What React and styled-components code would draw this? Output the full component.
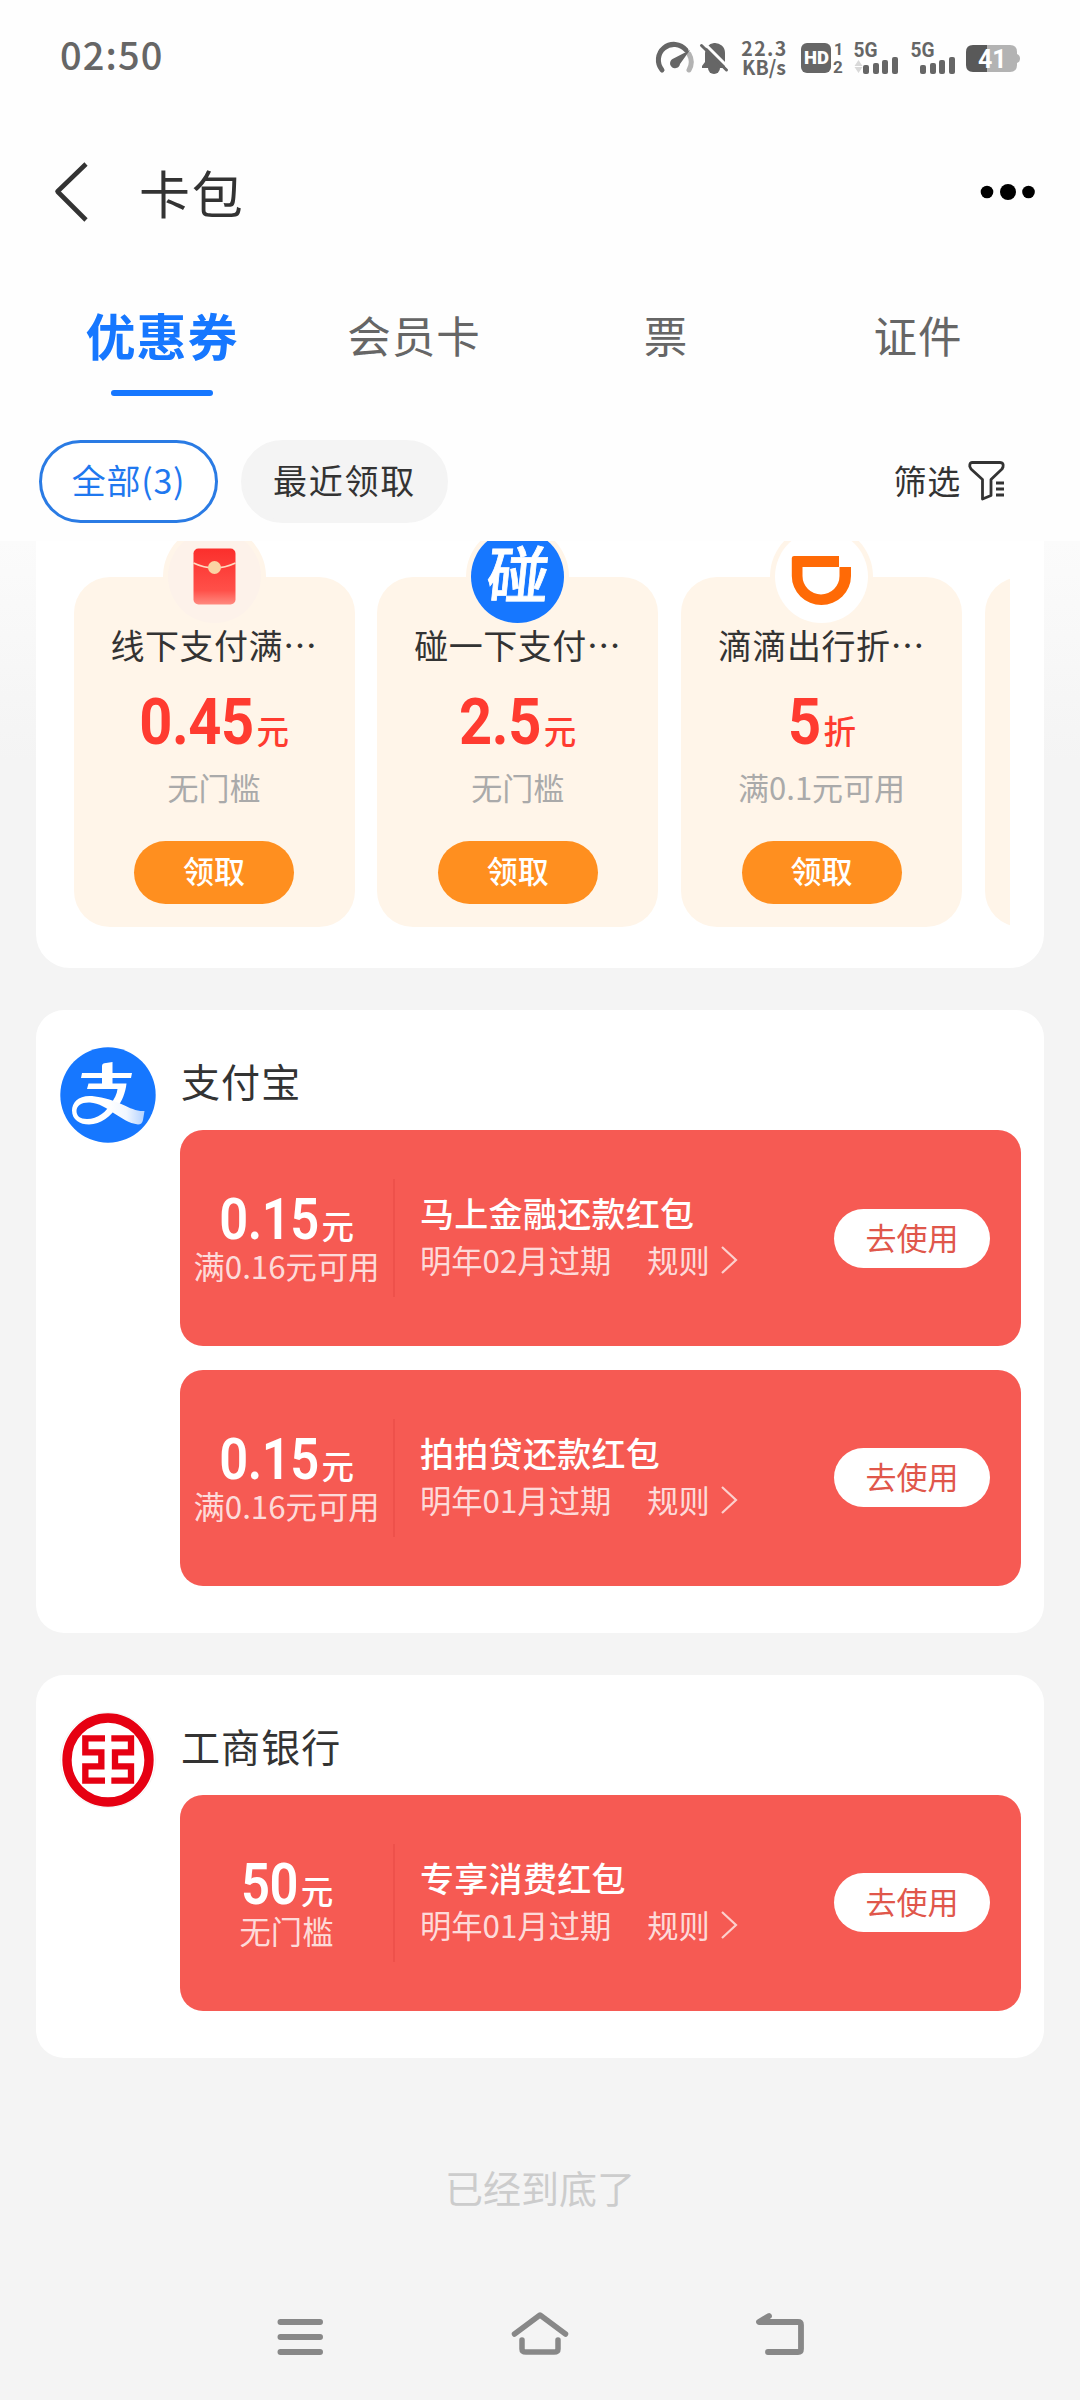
import React from "react";
import styled, { createGlobalStyle } from "styled-components";

const GlobalStyle = createGlobalStyle`
    * {
        box-sizing: border-box;
    }

    body {
        margin: 0;
        background-color: #f4f4f4;
        font-family: "Noto Sans CJK SC", "Noto Sans", sans-serif;
        color: #333333;
    }

    svg {
        display: block;
        flex-shrink: 0;
        overflow: visible;
    }
`;

const Page = styled.div`
    width: 1080px;
    height: 2400px;
    overflow: hidden;
    display: flex;
    flex-direction: column;
`;

const Top = styled.div`
    height: 541px;
    flex-shrink: 0;
    background-color: #fefefe;
`;

const StatusBar = styled.div`
    height: 115px;
    padding: 0 60px 0 60px;
    display: flex;
    align-items: center;
    justify-content: space-between;
    color: #666666;
`;

const Time = styled.div`
    font-size: 38px;
    font-weight: 500;
    line-height: 40px;
    letter-spacing: 1.1px;
    padding-bottom: 7px;
`;

const StatusIcons = styled.div`
    display: flex;
    align-items: center;
`;

const Speed = styled.div`
    width: 48px;
    margin: 0 12px 0 12px;
    padding-bottom: 2px;
    display: flex;
    flex-direction: column;
    align-items: center;
    font-size: 19.5px;
    font-weight: 700;
    line-height: 19px;
    white-space: nowrap;
`;

const SpeedValue = styled.div`
    letter-spacing: 1.4px;
    margin-right: -1px;
`;

const NavBar = styled.div`
    height: 155px;
    padding: 0 45px 2px 54px;
    display: flex;
    align-items: center;
`;

const Title = styled.div`
    flex: 1;
    margin-left: 50px;
    font-size: 51px;
    line-height: 60px;
    letter-spacing: 1.8px;
`;

const Tabs = styled.div`
    display: flex;
    padding: 8px 36px 0;
`;

const Tab = styled.div`
    width: 252px;
    display: flex;
    flex-direction: column;
    align-items: center;
    line-height: ${(props) => (props.$active ? "112px" : "114px")};
    font-size: ${(props) => (props.$active ? "50px" : "43.5px")};
    font-weight: ${(props) => (props.$active ? 700 : 400)};
    letter-spacing: 1px;
    color: ${(props) => (props.$active ? "#1677ff" : "#666666")};
`;

const Underline = styled.div`
    width: 102px;
    height: 6px;
    border-radius: 3px;
    background-color: #1677ff;
`;

const Filters = styled.div`
    display: flex;
    align-items: center;
    padding: 44px 75px 0 39px;
`;

const Chip = styled.div`
    width: ${(props) => props.$width}px;
    height: 83px;
    margin-right: 23px;
    border-radius: 42px;
    border: 3px solid ${(props) => (props.$active ? "#2a7be4" : "#f4f4f4")};
    background-color: ${(props) => (props.$active ? "#ffffff" : "#f4f4f4")};
    color: ${(props) => (props.$active ? "#1f78ef" : "#333333")};
    font-size: 34px;
    line-height: 74px;
    letter-spacing: ${(props) => (props.$active ? "0.7px" : "1.7px")};
    text-align: center;
`;

const FilterButton = styled.div`
    margin-left: auto;
    display: flex;
    align-items: center;
    gap: 7px;
    font-size: 33px;
    line-height: 40px;
    letter-spacing: 0.8px;
    padding-bottom: 3px;
`;

const Content = styled.div`
    flex: 1;
    display: flex;
    flex-direction: column;
    gap: 42px;
    padding: 0 36px;
    background: linear-gradient(#fbfbfb, #f4f4f4 220px);
`;

const Panel = styled.div`
    background-color: #ffffff;
    border-radius: 28px;
`;

const PromoPanel = styled(Panel)`
    height: 427px;
    padding: 0 34.5px 41px 37.5px;
    border-radius: 0 0 34px 34px;
`;

const PromoList = styled.div`
    height: 386px;
    padding-top: 36px;
    display: flex;
    gap: 22.8px;
    overflow: hidden;
`;

const PromoCard = styled.div`
    width: 281px;
    height: 350px;
    flex-shrink: 0;
    border-radius: 36px;
    background-color: #fff5e9;
    display: flex;
    flex-direction: column;
    align-items: center;
`;

const PromoIcon = styled.div`
    width: 103px;
    height: 103px;
    margin-top: -52px;
    border-radius: 50%;
    background-color: #fff5e9;
    display: flex;
    align-items: center;
    justify-content: center;
`;

const PromoTitle = styled.div`
    margin-top: -5px;
    font-size: 34px;
    line-height: 44px;
    letter-spacing: 0.5px;
`;

/* Roboto digits squeezed towards the unit that follows them */
const Digits = styled.b`
    display: inline-block;
    font-family: Roboto, sans-serif;
    font-size: ${(props) => props.$size}px;
    font-weight: ${(props) => props.$weight};
    letter-spacing: -0.5px;
    transform: scaleX(0.89);
    transform-origin: right;
    margin-left: calc(${(props) => props.$length} * -0.055em);
    margin-right: 3px;
`;

const PromoAmount = styled.div`
    height: 64px;
    margin-top: 23px;
    display: flex;
    align-items: baseline;
    color: #ff3b30;
    font-size: 32.5px;
    font-weight: 500;
    line-height: 64px;
`;

const PromoLimit = styled.div`
    margin-top: 13px;
    font-size: 31px;
    line-height: 40px;
    color: #aaaaaa;
`;

const PromoButton = styled.div`
    width: 160px;
    height: 63px;
    margin-top: auto;
    margin-bottom: 23px;
    border-radius: 32px;
    background-color: #ff8f1f;
    color: #ffffff;
    font-size: 31px;
    font-weight: 500;
    line-height: 58px;
    text-align: center;
`;

const Group = styled(Panel)`
    display: flex;
    align-items: flex-start;
    padding: 37px 23px 47px 24px;
`;

const GroupBody = styled.div`
    flex: 1;
    margin-left: 24px;
`;

const GroupName = styled.div`
    height: 83px;
    padding-left: 1px;
    font-size: 39px;
    line-height: 66px;
    letter-spacing: 1.1px;
`;

const CouponList = styled.div`
    display: flex;
    flex-direction: column;
    gap: 23.5px;
`;

const Coupon = styled.div`
    height: 216px;
    padding-right: 31px;
    border-radius: 23px;
    background-color: #f65a53;
    color: #ffffff;
    display: flex;
    align-items: center;
`;

const CouponValue = styled.div`
    width: 215px;
    height: 118px;
    border-right: 2px solid #ee514b;
    display: flex;
    flex-direction: column;
    align-items: center;
`;

const CouponAmount = styled.div`
    height: 52px;
    display: flex;
    align-items: baseline;
    font-size: 32.5px;
    font-weight: 500;
    line-height: 52px;
    margin-top: 15px;
`;

const CouponText = styled.div`
    font-size: 31.3px;
    line-height: 40px;
    color: rgba(255, 255, 255, 0.8);
    white-space: nowrap;
`;

const CouponInfo = styled.div`
    flex: 1;
    padding: 0 0 6px 25px;
`;

const CouponName = styled.div`
    font-size: 34px;
    font-weight: 500;
    line-height: 48px;
    letter-spacing: 0.3px;
    white-space: nowrap;
`;

const CouponMeta = styled.div`
    display: flex;
    align-items: center;
    margin-top: 3px;
    margin-bottom: 1px;
`;

const Rule = styled(CouponText)`
    margin: 0 10px 0 36px;
`;

const UseButton = styled.div`
    width: 156px;
    height: 59px;
    border-radius: 30px;
    background-color: #ffffff;
    color: #e0574b;
    font-size: 31px;
    line-height: 55px;
    text-align: center;
`;

const EndText = styled.div`
    margin-top: 60px;
    font-size: 38px;
    line-height: 54px;
    color: #cccccc;
    text-align: center;
`;

const SystemNav = styled.div`
    height: 126px;
    flex-shrink: 0;
    background-color: #f4f4f4;
    padding: 0 270px;
    display: flex;
    align-items: center;
    justify-content: space-between;
`;

const Gap = styled.div`
    width: ${(props) => props.$width}px;
`;

const GaugeIcon = () => (
    <svg width="37" height="32" viewBox="0 0 37 32" fill="none">
        <path d="M5 28A15.5 15.5 0 0 1 29 8" stroke="#666666" strokeWidth="5" strokeLinecap="round" />
        <path d="M32 12A16 16 0 0 1 32 28" stroke="#b3b3b3" strokeWidth="5" strokeLinecap="round" />
        <path d="M33 8L23 22A5 5 0 1 1 15.500 17Z" fill="#666666" />
    </svg>
);

const BellOffIcon = () => (
    <svg width="28" height="32" viewBox="0 0 28 32">
        <path d="M2 26V24L5 20V11A10 10 0 0 1 14 1A10 10 0 0 1 25 11V26Z" fill="#666666" />
        <path d="M8 26H20A6 6 0 0 1 8 26Z" fill="#666666" />
        <path d="M4.500 1.500L29 26" stroke="#fefefe" strokeWidth="3" />
        <path d="M1.500 3.500L26.500 28" stroke="#666666" strokeWidth="3" strokeLinecap="round" />
    </svg>
);

const HdIcon = () => (
    <svg width="44" height="32" viewBox="0 0 44 32" fill="#666666" fontFamily="Roboto, sans-serif" fontWeight="700">
        <rect x="1" y="1" width="30" height="30" rx="6" />
        <text x="4" y="22" fontSize="17.500" fontWeight="900" fill="#fefefe" textLength="25" lengthAdjust="spacingAndGlyphs">HD</text>
        <text x="34" y="13" fontSize="16">1</text>
        <text x="33" y="31" fontSize="17">2</text>
    </svg>
);

const SignalIcon = ({ arrows }) => (
    <svg width="46" height="32" viewBox="0 0 46 32" fill="#666666">
        <text
            x="-0.500"
            y="15"
            fontSize="19.500"
            fontFamily="Roboto, sans-serif"
            fontWeight="700"
            textLength="24"
            lengthAdjust="spacingAndGlyphs"
        >
            5G
        </text>
        {arrows && <path d="M0.500 24L4.500 18L8.500 24ZM0.500 25L4.500 31L8.500 25Z" fill="#d9d9d9" />}
        <rect x="9" y="23" width="6" height="9" rx="2" />
        <rect x="19" y="21" width="6" height="11" rx="2" />
        <rect x="28" y="18" width="6" height="14" rx="2" />
        <rect x="38" y="15" width="6" height="17" rx="2" />
    </svg>
);

const BatteryIcon = () => (
    <svg width="54" height="28" viewBox="0 -1 54 28">
        <path d="M21 0H44Q51 0 51 7V20Q51 27 44 27H21Z" fill="#b3b3b3" />
        <path d="M51 9Q54 10 54 13.500Q54 17 51 18Z" fill="#b3b3b3" />
        <path d="M7 0H21V27H7Q0 27 0 20V7Q0 0 7 0Z" fill="#595959" />
        <text x="12" y="22.500" fontSize="25" fontFamily="Roboto, sans-serif" fontWeight="700" fill="#ffffff">41</text>
    </svg>
);

const BackIcon = () => (
    <svg width="35" height="58" viewBox="0 0 35 58" fill="none">
        <path d="M32 1L3.500 28.500L32 57" stroke="#333333" strokeWidth="4.600" strokeLinejoin="round" />
    </svg>
);

const MoreIcon = () => (
    <svg width="55" height="18" viewBox="0 0 55 18">
        <circle cx="7" cy="9" r="6.300" />
        <circle cx="28" cy="9" r="8" />
        <circle cx="48.500" cy="9" r="6.300" />
    </svg>
);

const FunnelIcon = () => (
    <svg width="37" height="42" viewBox="0 -1.500 37 42" fill="none" stroke="#333333" strokeWidth="2.800" strokeLinejoin="round">
        <path d="M4 2H32Q36 2 35 6.500L34 8.500L23 19V35L14.500 38.500V19L3 8.500L1.800 6Q1.500 2 4 2Z" />
        <path d="M28 22.500H36M28 28.500H36M28 34.500H36" />
    </svg>
);

const EnvelopeIcon = () => (
    <svg width="93" height="93" viewBox="0 0 93 93">
        <defs>
            <linearGradient id="envelope" x1="0" y1="0" x2="0" y2="1">
                <stop offset="0" stopColor="#fb2f2c" />
                <stop offset="0.750" stopColor="#ff5049" />
                <stop offset="1" stopColor="#ff8a80" />
            </linearGradient>
        </defs>
        <circle cx="46.500" cy="46.500" r="46.500" fill="#fdf2ea" />
        <rect x="25.500" y="18.500" width="42" height="56" rx="5" fill="url(#envelope)" />
        <path d="M25.500 33Q46.500 43 67.500 33" fill="none" stroke="#ffd9c0" strokeWidth="1.800" />
        <circle cx="46.500" cy="37.500" r="6.500" fill="#fbd3a4" />
    </svg>
);

const TapIcon = () => (
    <svg width="93" height="93" viewBox="0 0 93 93">
        <circle cx="46.500" cy="46.500" r="46.500" fill="#1677ff" />
        <text
            transform="translate(45 68) skewX(-6)"
            fontSize="62"
            fontWeight="500"
            fill="#ffffff"
            stroke="#ffffff"
            strokeWidth="0.800"
            textAnchor="middle"
        >
            碰
        </text>
    </svg>
);

const DidiIcon = () => (
    <svg width="93" height="93" viewBox="0 0 93 93">
        <circle cx="46.500" cy="46.500" r="46.500" fill="#ffffff" />
        <path
            d="M19 26H64V37H27.500V46A18.500 18.500 0 0 0 64.500 46V37H76V46A29.600 29 0 0 1 16.800 46V28Q17 26 19 26Z"
            fill="#ff6a06"
        />
    </svg>
);

const AlipayIcon = () => (
    <svg width="96" height="96" viewBox="0 0 96 96">
        <defs>
            <linearGradient id="ribbon" x1="0" y1="0" x2="1" y2="0">
                <stop offset="0.500" stopColor="#ffffff" />
                <stop offset="0.750" stopColor="#f0f6ff" />
                <stop offset="1" stopColor="#b4d2ff" />
            </linearGradient>
        </defs>
        <circle cx="48" cy="48" r="47.700" fill="#1677ff" />
        <path d="M22 26H42V19Q42 16 46 16L52.500 15V26H72L71 31H52.500V36.500H66.500C65.500 46 62 54 57 61L50.500 57C54.500 52 57 47 57.500 42H27L28.500 36.500H42V31H21Z" fill="#ffffff" />
        <path
            d="M84.500 64C70 65 60 52 32 49C19 48 12 55 12 63.500C12 73 20 77.500 29 77.500C41 77.500 51 69 58 59L52 55.500C46 65 38 72 27 72C20 72 16.500 69 16.500 64C16.500 58.500 22 55 30 55.500C48 57 60 75 78 77.500Q82 77.500 83 73Z"
            fill="url(#ribbon)"
        />
    </svg>
);

const IcbcIcon = () => (
    <svg width="96" height="96" viewBox="15 18 288 288" fill="none" stroke="#e60012">
        <circle cx="159" cy="162" r="143" stroke="#eeeeee" strokeWidth="2" />
        <ellipse cx="159" cy="162" rx="123" ry="126" strokeWidth="28" />
        <path
            d="M150 97H91V139H139V181H91V224H150M169 97H228V139H180V181H228V224H169"
            strokeWidth="19"
        />
    </svg>
);

const ArrowIcon = () => (
    <svg width="18" height="28" viewBox="0 0 18 28" fill="none">
        <path d="M2 1L16 14L2 27" stroke="#fcd0cd" strokeWidth="2.200" />
    </svg>
);

const MenuIcon = () => (
    <svg width="60" height="60" viewBox="0 0 60 60" stroke="#888888" strokeWidth="6" strokeLinecap="round">
        <path d="M10.500 15H50M10.500 30H50M10.500 45H50" />
    </svg>
);

const HomeIcon = () => (
    <svg width="60" height="60" viewBox="0 0 60 60" fill="none" stroke="#888888" strokeWidth="5.500" strokeLinecap="round" strokeLinejoin="round">
        <path d="M4.500 27L30 8L55.500 27" />
        <path d="M12 33V42Q12 45 16 45H44Q48 45 48 42V33" />
    </svg>
);

const ReturnIcon = () => (
    <svg width="60" height="60" viewBox="0 0 60 60" fill="none" stroke="#888888" strokeWidth="5.800" strokeLinecap="round" strokeLinejoin="round">
        <path d="M19 9L9 15H48Q51 15 51 18V42Q51 45 48 45H18" />
    </svg>
);

const tabs = ["优惠券", "会员卡", "票", "证件"];

const promos = [
    { title: "线下支付满…", amount: "0.45", unit: "元", limit: "无门槛", icon: <EnvelopeIcon /> },
    { title: "碰一下支付…", amount: "2.5", unit: "元", limit: "无门槛", icon: <TapIcon /> },
    { title: "滴滴出行折…", amount: "5", unit: "折", limit: "满0.1元可用", icon: <DidiIcon /> },
];

const groups = [
    {
        name: "支付宝",
        icon: <AlipayIcon />,
        coupons: [
            { amount: "0.15", limit: "满0.16元可用", name: "马上金融还款红包", expires: "明年02月过期" },
            { amount: "0.15", limit: "满0.16元可用", name: "拍拍贷还款红包", expires: "明年01月过期" },
        ],
    },
    {
        name: "工商银行",
        icon: <IcbcIcon />,
        coupons: [
            { amount: "50", limit: "无门槛", name: "专享消费红包", expires: "明年01月过期" },
        ],
    },
];

const App = () => {
    return (
        <Page lang="zh-CN">
            <GlobalStyle />
            <Top>
                <StatusBar>
                    <Time>02:50</Time>
                    <StatusIcons>
                        <GaugeIcon />
                        <Gap $width={6} />
                        <BellOffIcon />
                        <Speed>
                            <SpeedValue>22.3</SpeedValue>
                            <div>KB/s</div>
                        </Speed>
                        <HdIcon />
                        <Gap $width={10} />
                        <SignalIcon arrows />
                        <Gap $width={11} />
                        <SignalIcon />
                        <Gap $width={9} />
                        <BatteryIcon />
                    </StatusIcons>
                </StatusBar>
                <NavBar>
                    <BackIcon />
                    <Title>卡包</Title>
                    <MoreIcon />
                </NavBar>
                <Tabs>
                    {tabs.map((tab, index) => (
                        <Tab key={tab} $active={index === 0}>
                            {tab}
                            {index === 0 && <Underline />}
                        </Tab>
                    ))}
                </Tabs>
                <Filters>
                    <Chip $active $width={179}>全部(3)</Chip>
                    <Chip $width={207}>最近领取</Chip>
                    <FilterButton>
                        筛选
                        <FunnelIcon />
                    </FilterButton>
                </Filters>
            </Top>
            <Content>
                <PromoPanel>
                    <PromoList>
                        {promos.map((promo) => (
                            <PromoCard key={promo.title}>
                                <PromoIcon>{promo.icon}</PromoIcon>
                                <PromoTitle>{promo.title}</PromoTitle>
                                <PromoAmount>
                                    <Digits $size={65} $weight={700} $length={promo.amount.length}>
                                        {promo.amount}
                                    </Digits>
                                    {promo.unit}
                                </PromoAmount>
                                <PromoLimit>{promo.limit}</PromoLimit>
                                <PromoButton>领取</PromoButton>
                            </PromoCard>
                        ))}
                        <PromoCard />
                    </PromoList>
                </PromoPanel>
                {groups.map((group) => (
                    <Group key={group.name}>
                        {group.icon}
                        <GroupBody>
                            <GroupName>{group.name}</GroupName>
                            <CouponList>
                                {group.coupons.map((coupon) => (
                                    <Coupon key={coupon.name}>
                                        <CouponValue>
                                            <CouponAmount>
                                                <Digits $size={57} $weight={600} $length={coupon.amount.length}>
                                                    {coupon.amount}
                                                </Digits>
                                                元
                                            </CouponAmount>
                                            <CouponText>{coupon.limit}</CouponText>
                                        </CouponValue>
                                        <CouponInfo>
                                            <CouponName>{coupon.name}</CouponName>
                                            <CouponMeta>
                                                <CouponText>{coupon.expires}</CouponText>
                                                <Rule>规则</Rule>
                                                <ArrowIcon />
                                            </CouponMeta>
                                        </CouponInfo>
                                        <UseButton>去使用</UseButton>
                                    </Coupon>
                                ))}
                            </CouponList>
                        </GroupBody>
                    </Group>
                ))}
                <EndText>已经到底了</EndText>
            </Content>
            <SystemNav>
                <MenuIcon />
                <HomeIcon />
                <ReturnIcon />
            </SystemNav>
        </Page>
    );
};

export default App;
